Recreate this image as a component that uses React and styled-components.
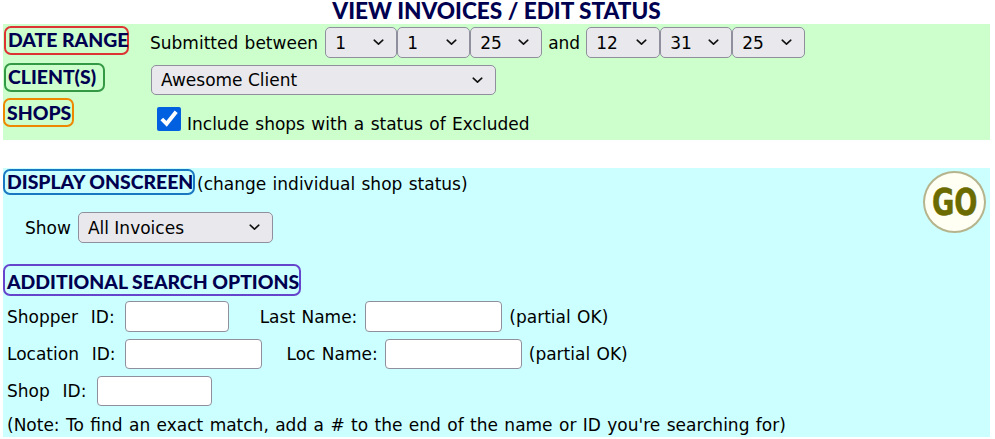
import React from 'react';
import styled, { createGlobalStyle } from 'styled-components';

const chevron = `url("data:image/svg+xml,%3Csvg xmlns='http://www.w3.org/2000/svg' width='11' height='7' viewBox='0 0 11 7'%3E%3Cpath d='M1.2 1.2 5.5 5.2 9.8 1.2' fill='none' stroke='%23111' stroke-width='1.6' stroke-linecap='round' stroke-linejoin='round'/%3E%3C/svg%3E")`;

const GlobalStyle = createGlobalStyle`
  html, body { margin: 0; padding: 0; background: #fff; }
  body {
    font-family: "DejaVu Sans", Verdana, sans-serif;
    font-size: 17px;
    word-spacing: 1px;
    color: #000;
  }
`;

const Page = styled.div`
  width: 995px;
  height: 439px;
  overflow: hidden;
`;

const Title = styled.h1`
  margin: 0;
  height: 24px;
  width: 993px;
  text-align: center;
  font: 900 22.6px/22px "Lato", sans-serif;
  word-spacing: 0;
  color: #000050;
`;

const GreenPanel = styled.section`
  margin-left: 3px;
  width: 987px;
  height: 116px;
  background: #ccffcc;
  display: grid;
  grid-template-columns: 147px 1fr;
`;

const LabelColumn = styled.div`
  display: flex;
  flex-direction: column;
  align-items: flex-start;
  padding-top: 2px;
`;

const Tag = styled.span`
  display: inline-block;
  box-sizing: border-box;
  width: ${p => p.$w}px;
  height: ${p => p.$h || 29}px;
  margin-left: ${p => p.$left || 0}px;
  margin-bottom: ${p => p.$gap || 0}px;
  padding-left: 2px;
  border: 2px solid ${p => p.$color};
  border-radius: 7px;
  font: 900 19.4px/${p => p.$lh || 23}px "Lato", sans-serif;
  word-spacing: 0;
  color: #000050;
  white-space: nowrap;
`;

const FieldColumn = styled.div`
  display: flex;
  flex-direction: column;
`;

const DateRow = styled.div`
  display: flex;
  align-items: center;
  height: 31px;
  margin-top: 3px;
`;

const Words = styled.span`
  white-space: pre;
  margin: ${p => p.$top || 0}px ${p => p.$right || 0}px 0 ${p => p.$left || 0}px;
`;

const Select = styled.select`
  appearance: none;
  box-sizing: border-box;
  width: ${p => p.$w}px;
  height: ${p => p.$h || 31}px;
  margin: 0;
  padding: 0 0 0 9px;
  background: #e9e9ed ${chevron} no-repeat right 12px center;
  border: 1px solid #8f8f9d;
  border-radius: 5px;
  color: #000;
  font: 17px "DejaVu Sans", sans-serif;
`;

const ClientSelect = styled(Select)`
  margin: 7px 0 0 1px;
  display: block;
`;

const CheckRow = styled.label`
  display: flex;
  align-items: center;
  height: 24px;
  margin: 12px 0 0 7px;
`;

const Check = styled.input`
  width: 24px;
  height: 24px;
  margin: 0 6px 0 0;
  accent-color: #0060df;
`;

const BluePanel = styled.section`
  position: relative;
  margin: 28px 0 0 3px;
  width: 987px;
  height: 269px;
  background: #ccffff;
  padding-top: 1px;
  box-sizing: border-box;
`;

const HeadRow = styled.div`
  display: flex;
  align-items: center;
  height: 26px;
`;

const ShowRow = styled.div`
  display: flex;
  align-items: center;
  height: 31px;
  margin: 17px 0 0 22px;
`;

const SearchHead = styled.div`
  margin: 21px 0 0 0;
  height: 32px;
`;

const FormRow = styled.div`
  display: flex;
  align-items: center;
  height: ${p => p.$h || 30}px;
  margin-top: ${p => p.$top || 7}px;
  padding-left: 4px;
`;

const TextBox = styled.input`
  box-sizing: border-box;
  width: ${p => p.$w}px;
  height: 100%;
  margin: 0;
  padding: 0 4px;
  background: #fff;
  border: 1px solid #8f8f9d;
  border-radius: 4px;
`;

const Note = styled.div`
  margin: 8px 0 0 4px;
  line-height: 22px;
  white-space: pre;
`;

const GoButton = styled.div`
  position: absolute;
  top: 3px;
  right: 4px;
  width: 63px;
  height: 62px;
  box-sizing: border-box;
  border-radius: 50%;
  border: 2px solid #b5b48c;
  background: #fffff4;
  display: flex;
  align-items: center;
  justify-content: center;
  font: bold 38px/1 "DejaVu Sans", sans-serif;
  word-spacing: 0;
  color: #6b6b00;
`;

const GoText = styled.span`
  display: inline-block;
  transform: scaleX(0.72);
  -webkit-text-stroke: 0.5px #6b6b00;
`;

const DateSelect = ({ value, w }) => (
  <Select $w={w} defaultValue={value}>
    <option>{value}</option>
  </Select>
);

export default function App() {
  return (
    <Page>
      <GlobalStyle />
      <Title>VIEW INVOICES / EDIT STATUS</Title>
      <GreenPanel>
        <LabelColumn>
          <Tag $color="#dd3333" $left={1} $gap={8} $w={125}>DATE RANGE</Tag>
          <Tag $color="#339944" $left={1} $gap={6} $w={101}>CLIENT(S)</Tag>
          <Tag $color="#ee8800" $w={71} $lh={25}>SHOPS</Tag>
        </LabelColumn>
        <FieldColumn>
          <DateRow>
            <Words $right={7}>Submitted between</Words>
            <DateSelect value="1" w={72} />
            <DateSelect value="1" w={73} />
            <DateSelect value="25" w={72} />
            <Words $left={6} $right={6}>and</Words>
            <DateSelect value="12" w={74} />
            <DateSelect value="31" w={72} />
            <DateSelect value="25" w={73} />
          </DateRow>
          <ClientSelect $w={345} $h={30} defaultValue="Awesome Client">
            <option>Awesome Client</option>
          </ClientSelect>
          <CheckRow>
            <Check type="checkbox" defaultChecked />
            <Words $top={9}>Include shops with a status of Excluded</Words>
          </CheckRow>
        </FieldColumn>
      </GreenPanel>
      <BluePanel>
        <GoButton><GoText>GO</GoText></GoButton>
        <HeadRow>
          <Tag $color="#1a78c2" $h={26} $w={192} $lh={22}>DISPLAY ONSCREEN</Tag>
          <Words $left={2} $top={4}>(change individual shop status)</Words>
        </HeadRow>
        <ShowRow>
          <Words $right={7}>Show</Words>
          <Select $w={195} defaultValue="All Invoices">
            <option>All Invoices</option>
          </Select>
        </ShowRow>
        <SearchHead>
          <Tag $color="#6644cc" $h={32} $w={298} $lh={32}>ADDITIONAL SEARCH OPTIONS</Tag>
        </SearchHead>
        <FormRow $top={5} $h={31}>
          <Words $right={10}>Shopper  ID:</Words>
          <TextBox $w={104} />
          <Words $left={31} $right={8}>Last Name:</Words>
          <TextBox $w={137} />
          <Words $left={7}>(partial OK)</Words>
        </FormRow>
        <FormRow>
          <Words $right={9}>Location  ID:</Words>
          <TextBox $w={137} />
          <Words $left={25} $right={7}>Loc Name:</Words>
          <TextBox $w={137} />
          <Words $left={7}>(partial OK)</Words>
        </FormRow>
        <FormRow>
          <Words $right={11}>Shop  ID:</Words>
          <TextBox $w={115} />
        </FormRow>
        <Note>(Note: To find an exact match, add a # to the end of the name or ID you're searching for)</Note>
      </BluePanel>
    </Page>
  );
}
